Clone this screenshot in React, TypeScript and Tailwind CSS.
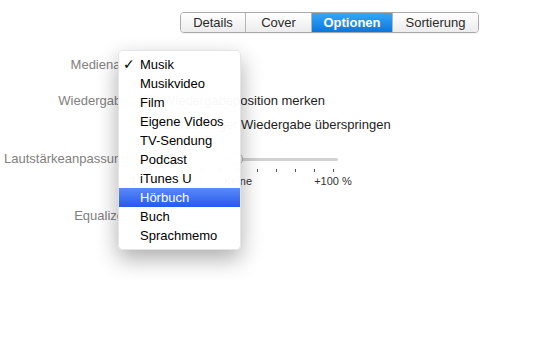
import React from "react"

const segments = [
	{ label: "Details", w: "w-[64px]" },
	{ label: "Cover", w: "w-[66px]" },
	{ label: "Optionen", w: "w-[81px]", active: true },
	{ label: "Sortierung", w: "w-[86px]" }
]

const mediaKinds = [
	"Musik",
	"Musikvideo",
	"Film",
	"Eigene Videos",
	"TV-Sendung",
	"Podcast",
	"iTunes U",
	"Hörbuch",
	"Buch",
	"Sprachmemo"
]

function Label({ children }: { children: React.ReactNode }) {
	return (
		<div className="w-[132px] shrink-0 text-right text-[13px] text-[#808080] whitespace-nowrap">
			{children}
		</div>
	)
}

function Checkbox() {
	return (
		<div className="w-[13px] h-[13px] rounded-[3px] border border-[#a0a0a0] bg-white shrink-0" />
	)
}

export default function App() {
	const ticks = Array.from({ length: 11 }, (_, i) => i)
	return (
		<div
			className="relative w-[548px] h-[353px] bg-white overflow-hidden"
			style={{ fontFamily: '"Liberation Sans", Arial, sans-serif' }}
		>
			{/* segmented control */}
			<div className="pt-[12px] pl-[180px]">
				<div className="flex h-[21px] w-fit rounded-[4px] border border-[#a9a9a9] overflow-hidden shadow-[0_1px_0_rgba(0,0,0,0.05)]">
					{segments.map((s, i) => (
						<div
							key={s.label}
							className={`${s.w} flex items-center justify-center text-[13px] ${
								i > 0 ? "border-l border-[#b5b5b5]" : ""
							} ${
								s.active
									? "bg-gradient-to-b from-[#35a8f8] to-[#0b76dc] text-white font-bold"
									: "bg-gradient-to-b from-[#ffffff] to-[#ececec] text-[#2a2a2a]"
							}`}
						>
							{s.label}
						</div>
					))}
				</div>
			</div>

			{/* form rows */}
			<div className="flex flex-col">
				<div className="mt-[22px] h-[20px] flex items-center gap-[8px]">
					<Label>Medienart:</Label>
				</div>
				<div className="mt-[16px] h-[20px] flex items-center gap-[8px]">
					<Label>Wiedergabe:</Label>
					<Checkbox />
					<span className="ml-[2px] text-[13px] text-[#1e1e1e] whitespace-nowrap">
						Wiedergabeposition merken
					</span>
				</div>
				<div className="mt-[4px] h-[20px] flex items-center gap-[8px]">
					<div className="w-[132px] shrink-0" />
					<Checkbox />
					<span className="ml-[2px] text-[13px] text-[#1e1e1e] whitespace-nowrap">
						Bei zufälliger Wiedergabe überspringen
					</span>
				</div>
				<div className="mt-[14px] h-[20px] flex items-center gap-[8px]">
					<Label>Lautstärkeanpassung:</Label>
					<div className="relative w-[198px] h-[20px]">
						<div className="absolute left-0 right-0 top-[9px] h-[3px] rounded-full bg-[#d2d2d2]" />
						<div className="absolute left-[89px] top-[3px] w-[14px] h-[14px] rounded-full bg-gradient-to-b from-white to-[#ececec] border border-[#b0b0b0]" />
					</div>
				</div>
				<div className="ml-[140px] relative w-[198px] h-[24px]">
					<div className="flex justify-between px-[4px]">
						{ticks.map(t => (
							<div key={t} className="w-px h-[3px] bg-[#555]" />
						))}
					</div>
					<div className="absolute left-[-15px] top-[4px] w-[38px] text-center text-[11px] text-[#333]">
						-100 %
					</div>
					<div className="absolute left-[79px] top-[4px] w-[38px] text-center text-[11px] text-[#333]">
						Keine
					</div>
					<div className="absolute left-[173px] top-[4px] w-[40px] text-center text-[11px] text-[#333] whitespace-nowrap">
						+100 %
					</div>
				</div>
				<div className="mt-[13px] h-[20px] flex items-center gap-[8px]">
					<Label>Equalizer:</Label>
				</div>
			</div>

			{/* open media kind menu */}
			<div className="absolute left-[118px] top-[50px] w-[123px] py-[4px] rounded-[5px] bg-white/[0.97] border border-black/10 shadow-[0_9px_22px_rgba(0,0,0,0.32)]">
				{mediaKinds.map(kind => {
					const hl = kind === "Hörbuch"
					return (
						<div
							key={kind}
							className={`relative h-[19px] flex items-center pl-[21px] text-[13px] whitespace-nowrap ${
								hl
									? "bg-gradient-to-b from-[#5a8af8] to-[#2857ef] text-white"
									: "text-black"
							}`}
						>
							{kind === "Musik" && (
								<span
									className="absolute left-[4px] text-[14px] font-bold"
									style={{ fontFamily: '"DejaVu Sans", sans-serif' }}
								>
									✓
								</span>
							)}
							{kind}
						</div>
					)
				})}
			</div>
		</div>
	)
}
